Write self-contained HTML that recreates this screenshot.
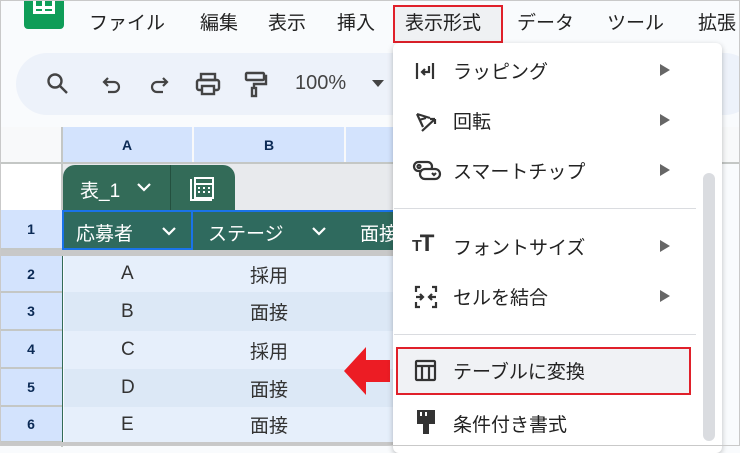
<!DOCTYPE html>
<html><head><meta charset="utf-8"><style>
*{margin:0;padding:0;box-sizing:border-box}
body{width:740px;height:446px;overflow:hidden;background:#f9fbfd;font-family:"Liberation Sans","Noto Sans CJK JP",sans-serif;position:relative;color:#1f1f1f}
.a{position:absolute}
.mb{top:8px;font-size:19px;color:#222}
.hdr{background:#d3e3fd;font-weight:bold;font-size:14px;color:#0b2a55;display:flex;align-items:center;justify-content:center}
.rl{left:0;width:62px;background:#d3e3fd;font-weight:bold;font-size:14px;color:#0b2a55;display:flex;align-items:center;justify-content:center;border-bottom:2px solid #c4c7c5}
.row{left:64px;width:335px;display:flex;align-items:center;font-size:19px;color:#333}
.mi{left:415px;font-size:19px;color:#222}
.tri{left:660px;width:0;height:0;border-left:10px solid #666;border-top:6px solid transparent;border-bottom:6px solid transparent}
</style></head><body>
<div class="a" style="left:0;top:0;width:740px;height:446px;border:1px solid #c9c9c9;z-index:20;pointer-events:none"></div>
<div class="a" style="left:24px;top:-4px;width:40px;height:33px;background:#0f9d58;border-radius:4px"></div>
<div class="a" style="left:33px;top:0;width:22px;height:14px;border:3px solid #fff;border-top:none"></div>
<div class="a" style="left:33px;top:6px;width:22px;height:3px;background:#fff"></div>
<div class="a" style="left:42px;top:0;width:3px;height:14px;background:#fff"></div>
<div class="a mb" style="left:89px">ファイル</div>
<div class="a mb" style="left:200px">編集</div>
<div class="a mb" style="left:268px">表示</div>
<div class="a mb" style="left:337px">挿入</div>
<div class="a mb" style="left:405px">表示形式</div>
<div class="a" style="left:393px;top:5px;width:110px;height:38px;border:2px solid #e0202a;background:rgba(0,0,0,0.04)"></div>
<div class="a mb" style="left:517px">データ</div>
<div class="a mb" style="left:607px">ツール</div>
<div class="a mb" style="left:698px">拡張</div>
<div class="a" style="left:16px;top:53px;width:740px;height:62px;background:#edf2fa;border-radius:31px"></div>
<svg class="a" style="left:44px;top:70px" width="28" height="28" viewBox="0 0 28 28" fill="none" stroke="#444" stroke-width="2.4"><circle cx="11" cy="11" r="6.5"/><path d="M16 16l7 7"/></svg>
<svg class="a" style="left:100px;top:73px" width="24" height="24" viewBox="0 0 24 24" fill="none" stroke="#444" stroke-width="2.2"><path d="M8 5L4 9l4 4M4 9h10a5 5 0 010 10H8"/></svg>
<svg class="a" style="left:147px;top:73px" width="24" height="24" viewBox="0 0 24 24" fill="none" stroke="#444" stroke-width="2.2"><path d="M16 5l4 4-4 4M20 9H10a5 5 0 000 10h6"/></svg>
<svg class="a" style="left:194px;top:72px" width="28" height="26" viewBox="0 0 28 26" fill="none" stroke="#444" stroke-width="2.4"><rect x="7" y="2" width="14" height="6"/><rect x="3" y="8" width="22" height="10" rx="2"/><rect x="8" y="14" width="12" height="8" fill="#edf2fa"/></svg>
<svg class="a" style="left:243px;top:70px" width="26" height="30" viewBox="0 0 26 30" fill="none" stroke="#444" stroke-width="2.4"><rect x="3" y="3" width="18" height="7" rx="1"/><path d="M21 6h2v8H11v4"/><rect x="9" y="18" width="4" height="8"/></svg>
<div class="a" style="left:295px;top:72px;font-size:20px;color:#444">100%</div>
<div class="a" style="left:372px;top:80px;border-top:7px solid #444;border-left:6px solid transparent;border-right:6px solid transparent"></div>
<div class="a" style="left:0;top:127px;width:740px;height:37px;background:#f8f9fa;border-bottom:2px solid #c4c7c5"></div>
<div class="a hdr" style="left:62px;top:127px;width:130px;height:35px">A</div>
<div class="a hdr" style="left:194px;top:127px;width:150px;height:35px">B</div>
<div class="a hdr" style="left:346px;top:127px;width:60px;height:35px"></div>
<div class="a" style="left:61px;top:127px;width:2px;height:320px;background:#c4c7c5"></div>
<div class="a" style="left:63px;top:164px;width:340px;height:46px;background:#e8eaed"></div>
<div class="a" style="left:0;top:164px;width:61px;height:46px;background:#fff"></div>
<div class="a" style="left:63px;top:165px;width:172px;height:46px;background:#336b58;border-radius:12px 12px 0 0"></div>
<div class="a" style="left:170px;top:165px;width:1px;height:45px;background:#24503f"></div>
<div class="a" style="left:80px;top:176px;color:#fff;font-size:19px">表_1</div>
<svg class="a" style="left:135px;top:180px" width="18" height="14" viewBox="0 0 18 14" fill="none" stroke="#fff" stroke-width="2.2"><path d="M3 4l6 6 6-6"/></svg>
<svg class="a" style="left:188px;top:175px" width="28" height="28" viewBox="0 0 28 28" fill="none" stroke="#fff" stroke-width="2"><path d="M3 4v21h21"/><rect x="7" y="3" width="18" height="20"/><path d="M7 9h18M10 13h2M15 13h2M20 13h2M10 17h2M15 17h2M20 17h2"/></svg>
<div class="a rl" style="top:210px;height:40px">1</div>
<div class="a" style="left:63px;top:210px;width:340px;height:40px;background:#2f6a5e;border-top:2px solid #1a73e8"></div>
<div class="a" style="left:62px;top:210px;width:131px;height:40px;border:2px solid #1a73e8"></div>
<div class="a" style="left:76px;top:219px;color:#fff;font-size:19px">応募者</div>
<svg class="a" style="left:160px;top:224px" width="18" height="14" viewBox="0 0 18 14" fill="none" stroke="#fff" stroke-width="2.2"><path d="M3 4l6 6 6-6"/></svg>
<div class="a" style="left:208px;top:219px;color:#fff;font-size:19px">ステージ</div>
<svg class="a" style="left:310px;top:224px" width="18" height="14" viewBox="0 0 18 14" fill="none" stroke="#fff" stroke-width="2.2"><path d="M3 4l6 6 6-6"/></svg>
<div class="a" style="left:360px;top:219px;color:#fff;font-size:19px">面接</div>
<div class="a" style="left:0;top:250px;width:400px;height:6px;background:#c8c8c8"></div>
<div class="a rl" style="top:256px;height:37px">2</div>
<div class="a rl" style="top:293px;height:38px">3</div>
<div class="a rl" style="top:331px;height:38px">4</div>
<div class="a rl" style="top:369px;height:38px">5</div>
<div class="a rl" style="top:407px;height:36px">6</div>
<div class="a" style="left:62px;top:256px;width:3px;height:186px;border-left:1px solid #336b58;border-right:1px solid #336b58"></div>
<div class="a row" style="top:256px;height:36px;background:#e6effb"><span style="position:absolute;left:57px">A</span><span style="position:absolute;left:186px">採用</span></div>
<div class="a row" style="top:292px;height:39px;background:#dce8f6"><span style="position:absolute;left:57px">B</span><span style="position:absolute;left:186px">面接</span></div>
<div class="a row" style="top:331px;height:38px;background:#e6effb"><span style="position:absolute;left:57px">C</span><span style="position:absolute;left:186px">採用</span></div>
<div class="a row" style="top:369px;height:38px;background:#dce8f6"><span style="position:absolute;left:57px">D</span><span style="position:absolute;left:186px">面接</span></div>
<div class="a row" style="top:407px;height:35px;background:#e6effb"><span style="position:absolute;left:57px">E</span><span style="position:absolute;left:186px">面接</span></div>
<div class="a" style="left:0;top:442px;width:400px;height:4px;background:#c8c8c8"></div>
<svg class="a" style="left:344px;top:347px" width="46" height="48" viewBox="0 0 46 48"><path d="M0 24L22 0v13h24v22H22v13z" fill="#ec1c24"/></svg>
<div class="a" style="left:393px;top:43px;width:329px;height:410px;background:#fff;border-radius:6px;box-shadow:0 2px 6px rgba(0,0,0,.25)"></div>
<svg class="a" style="left:414px;top:60px" width="22" height="22" viewBox="0 0 22 22" fill="none" stroke="#333" stroke-width="2.2"><path d="M3 3v16M19 3v16M15 6v6H8M11 9l-3 3 3 3"/></svg>
<div class="a mi" style="top:57px;left:453px">ラッピング</div>
<svg class="a" style="left:414px;top:109px" width="26" height="26" viewBox="0 0 26 26" fill="none" stroke="#333" stroke-width="2.2"><path d="M3 5l6 13M3 5l13 4M5 11l7-2M8 22L21 10M21 10h-5M21 10v5"/></svg>
<div class="a mi" style="top:107px;left:453px">回転</div>
<svg class="a" style="left:412px;top:160px" width="30" height="22" viewBox="0 0 30 22" fill="none" stroke="#333" stroke-width="2.2"><rect x="2" y="2" width="18" height="9" rx="4.5"/><rect x="8" y="9" width="20" height="10" rx="5" fill="#fff"/><circle cx="7" cy="6.5" r="1.5"/><path d="M20 13l2 2 2-2"/></svg>
<div class="a mi" style="top:157px;left:453px">スマートチップ</div>
<div class="a" style="left:394px;top:208px;width:302px;height:1px;background:#dadce0"></div>
<div class="a" style="left:412px;top:230px;font-weight:bold;font-size:24px;color:#333;letter-spacing:-2px"><span style="font-size:16px">T</span>T</div>
<div class="a mi" style="top:233px;left:453px">フォントサイズ</div>
<svg class="a" style="left:414px;top:285px" width="24" height="24" viewBox="0 0 24 24" fill="none" stroke="#333" stroke-width="2.2"><path d="M2 7V2h4M18 2h4v5M2 17v5h4M18 22h4v-5M2 12h6M6 9l3 3-3 3M22 12h-6M18 9l-3 3 3 3"/></svg>
<div class="a mi" style="top:283px;left:453px">セルを結合</div>
<div class="a" style="left:394px;top:334px;width:302px;height:1px;background:#dadce0"></div>
<div class="a" style="left:396px;top:347px;width:295px;height:48px;background:#f0f2f5;border:2px solid #e0202a"></div>
<svg class="a" style="left:414px;top:359px" width="24" height="24" viewBox="0 0 24 24" fill="none" stroke="#333" stroke-width="2.2"><rect x="2" y="2" width="19" height="19" rx="1"/><path d="M2 7h19M8 7v14M15 7v14"/></svg>
<div class="a mi" style="top:357px;left:453px">テーブルに変換</div>
<svg class="a" style="left:415px;top:409px" width="22" height="28" viewBox="0 0 22 28" fill="#333"><path d="M2 1h18v14H2z M5 3v4h2V3zM10 3v4h2V3z" fill-rule="evenodd"/><rect x="8" y="15" width="6" height="10"/></svg>
<div class="a mi" style="top:410px;left:453px">条件付き書式</div>
<div class="a tri" style="top:64px"></div>
<div class="a tri" style="top:114px"></div>
<div class="a tri" style="top:164px"></div>
<div class="a tri" style="top:240px"></div>
<div class="a tri" style="top:290px"></div>
<div class="a" style="left:703px;top:173px;width:12px;height:268px;background:#dadce0;border-radius:6px"></div>
</body></html>
